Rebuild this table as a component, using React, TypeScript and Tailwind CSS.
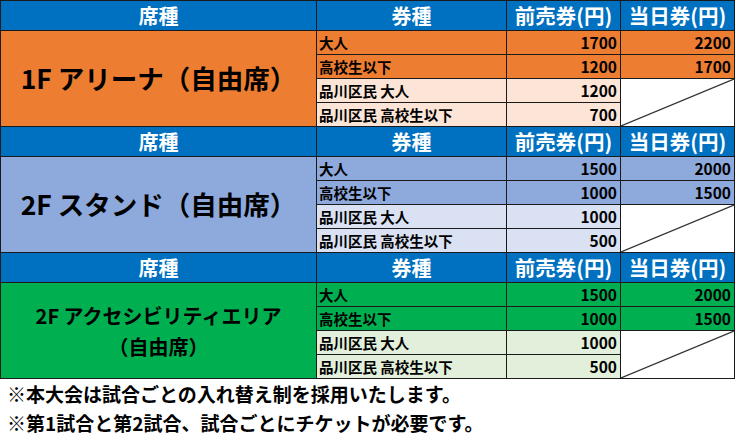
import React from "react";

type Section = {
  title: React.ReactNode;
  dark: string;
  light: string;
  rows: [string, string, string | null][];
};

const sections: Section[] = [
  {
    title: <span className="text-[26.5px] leading-none">1F アリーナ（自由席）</span>,
    dark: "bg-[#ED7D31]",
    light: "bg-[#FCE4D6]",
    rows: [
      ["大人", "1700", "2200"],
      ["高校生以下", "1200", "1700"],
      ["品川区民 大人", "1200", null],
      ["品川区民 高校生以下", "700", null],
    ],
  },
  {
    title: <span className="text-[26.5px] leading-none">2F スタンド（自由席）</span>,
    dark: "bg-[#8EA9DB]",
    light: "bg-[#D9E1F2]",
    rows: [
      ["大人", "1500", "2000"],
      ["高校生以下", "1000", "1500"],
      ["品川区民 大人", "1000", null],
      ["品川区民 高校生以下", "500", null],
    ],
  },
  {
    title: (
      <span className="text-[20px] leading-[31px] text-center">
        2F アクセシビリティエリア
        <br />
        （自由席）
      </span>
    ),
    dark: "bg-[#00B050]",
    light: "bg-[#E2EFDA]",
    rows: [
      ["大人", "1500", "2000"],
      ["高校生以下", "1000", "1500"],
      ["品川区民 大人", "1000", null],
      ["品川区民 高校生以下", "500", null],
    ],
  },
];

function Diagonal() {
  return (
    <svg className="absolute inset-0 w-full h-full" preserveAspectRatio="none" viewBox="0 0 100 100">
      <line x1="0" y1="100" x2="100" y2="0" stroke="#333" strokeWidth="1.2" vectorEffect="non-scaling-stroke" />
    </svg>
  );
}

export default function App() {
  const font = { fontFamily: '"Noto Sans CJK JP", "Noto Sans", sans-serif' };
  return (
    <div className="w-[736px] h-[444px] bg-white text-black font-bold" style={font}>
      <div className="w-[735px] bg-[#1a1a1a] p-px grid grid-cols-[315px_189px_113px_113px] gap-px grid-rows-[29px_23px_23px_23px_23px_29px_23px_23px_23px_23px_29px_23px_23px_23px_23px]">
        {sections.map((s, si) => (
          <React.Fragment key={si}>
            <div className="bg-[#0070C0] text-white text-[20px] flex items-center justify-center">席種</div>
            <div className="bg-[#0070C0] text-white text-[20px] flex items-center justify-center">券種</div>
            <div className="bg-[#0070C0] text-white text-[20.5px] flex items-center justify-center">前売券(円)</div>
            <div className="bg-[#0070C0] text-white text-[20.5px] flex items-center justify-center">当日券(円)</div>
            <div className={`${s.dark} row-span-4 flex items-center justify-center`}>{s.title}</div>
            {s.rows.map((r, ri) => {
              const bg = ri < 2 ? s.dark : s.light;
              return (
                <React.Fragment key={ri}>
                  <div className={`${bg} text-[14.5px] flex items-center pl-[2px]`}>{r[0]}</div>
                  <div className={`${bg} text-[15.5px] flex items-center justify-end pr-[3px]`}>{r[1]}</div>
                  {ri < 2 ? (
                    <div className={`${bg} text-[15.5px] flex items-center justify-end pr-[3px]`}>{r[2]}</div>
                  ) : ri === 2 ? (
                    <div className="bg-white row-span-2 relative">
                      <Diagonal />
                    </div>
                  ) : null}
                </React.Fragment>
              );
            })}
          </React.Fragment>
        ))}
      </div>
      <div className="pl-[7px] text-[19px] leading-[29px]">
        <p>※本大会は試合ごとの入れ替え制を採用いたします。</p>
        <p>※第1試合と第2試合、試合ごとにチケットが必要です。</p>
      </div>
    </div>
  );
}
